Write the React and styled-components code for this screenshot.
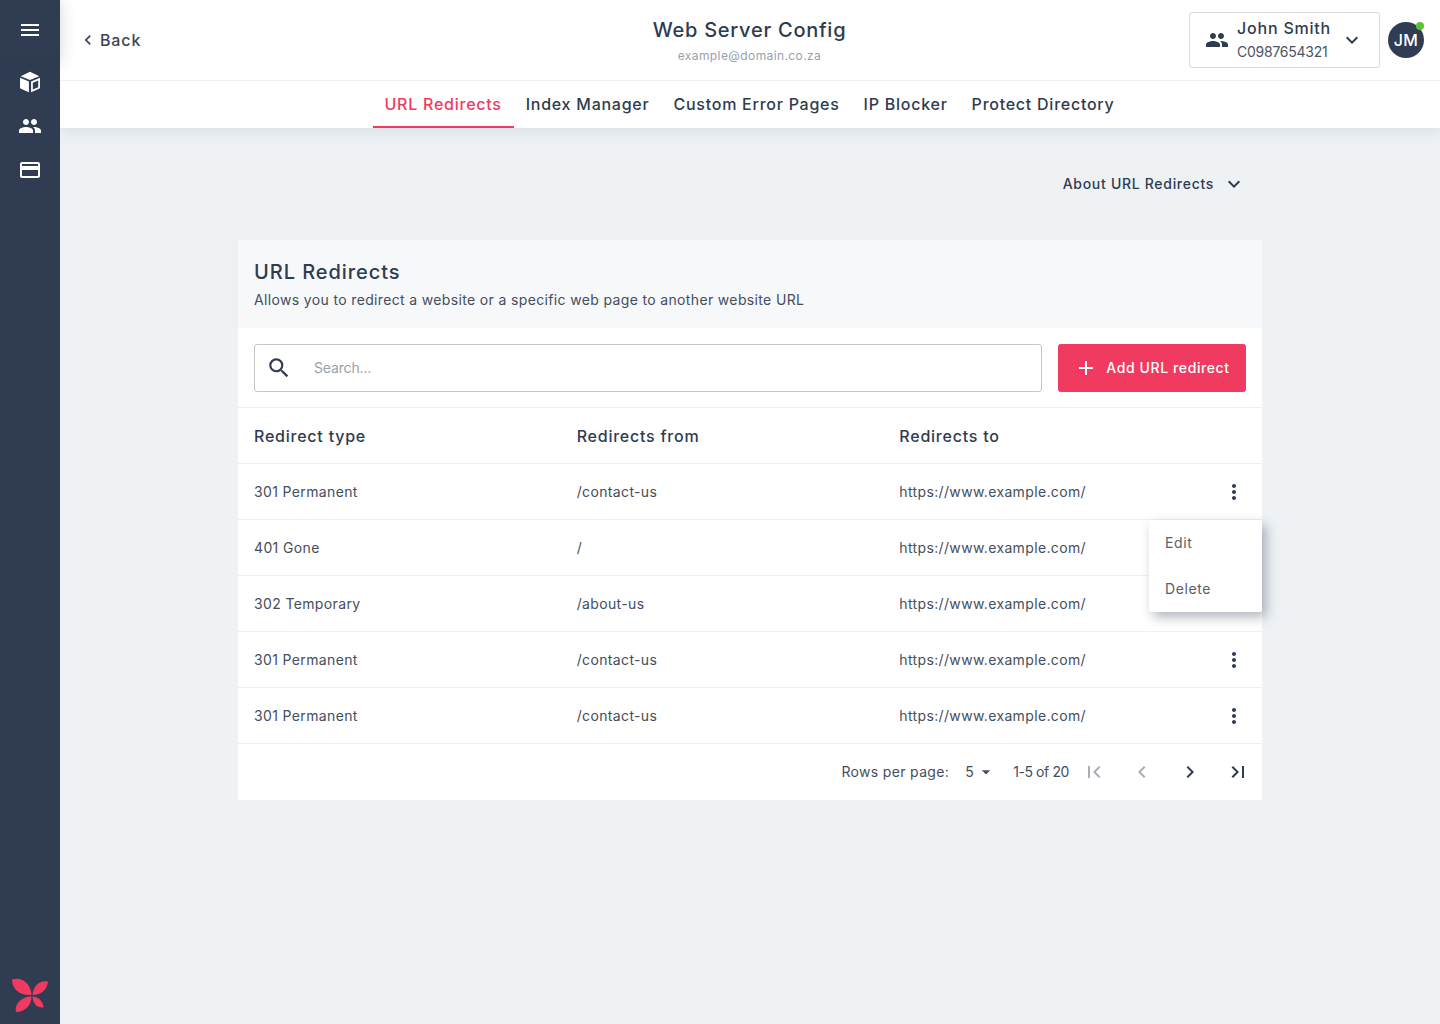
import React from "react";
import styled, { createGlobalStyle } from "styled-components";
import {
  MdMenu, MdPeople, MdCreditCard, MdKeyboardArrowDown, MdChevronLeft, MdChevronRight,
  MdSearch, MdAdd, MdMoreVert, MdFirstPage, MdLastPage, MdArrowDropDown,
} from "react-icons/md";

const Global = createGlobalStyle`
  html, body { margin: 0; padding: 0; }
  body { background: #eef2f5; font-family: "Inter", "Noto Sans", sans-serif; color: #2f3b50; }
  * { box-sizing: border-box; }
`;

const Page = styled.div`
  display: flex;
  min-height: 1024px;
  width: 1440px;
`;
const Sidebar = styled.aside`
  width: 60px;
  flex: none;
  background: #2f3c52;
  display: flex;
  flex-direction: column;
  align-items: center;
  color: #fff;
  position: relative;
  z-index: 2;
`;
const MenuBlock = styled.div`
  height: 60px;
  width: 60px;
  display: flex;
  align-items: center;
  justify-content: center;
  background: #2f3c52;
  box-shadow: 0 2px 14px rgba(47, 60, 82, 0.22);
`;
const SideBtn = styled.div`
  height: 44px;
  width: 60px;
  display: flex;
  align-items: center;
  justify-content: center;
`;
const Logo = styled.div`
  margin-top: auto;
  height: 47px;
`;
const Main = styled.div`
  flex: 1;
  min-width: 0;
  display: flex;
  flex-direction: column;
`;
const TopWrap = styled.div`
  background: #fff;
  box-shadow: 0 4px 14px rgba(47, 60, 82, 0.1);
  position: relative;
`;
const Header = styled.header`
  height: 81px;
  border-bottom: 1px solid #eef0f3;
  display: grid;
  grid-template-columns: 1fr auto 1fr;
  align-items: center;
  padding: 0 16px 1px 15px;
`;
const BackLink = styled.div`
  display: flex;
  align-items: center;
  gap: 2px;
  margin-left: 3px;
  font-size: 16px;
  font-weight: 500;
  letter-spacing: 0.85px;
  color: #3a4658;
`;
const TitleBlock = styled.div`
  text-align: center;
  padding-top: 5px;
`;
const Title = styled.div`
  font-size: 20px;
  font-weight: 500;
  line-height: 28px;
  letter-spacing: 0.74px;
  color: #2f3b50;
`;
const Sub = styled.div`
  font-size: 12px;
  line-height: 24px;
  letter-spacing: 0.4px;
  color: #9aa1ac;
`;
const HeaderRight = styled.div`
  display: flex;
  justify-content: flex-end;
  align-items: center;
  gap: 8px;
`;
const Account = styled.div`
  width: 191px;
  height: 56px;
  border: 1px solid #d5d8dc;
  border-radius: 3px;
  display: flex;
  align-items: center;
  padding: 0 15px;
  color: #2f3b50;
`;
const AccountText = styled.div`
  flex: 1;
  margin-left: 8px;
`;
const AccountName = styled.div`
  font-size: 16px;
  font-weight: 500;
  line-height: 24px;
  letter-spacing: 0.8px;
`;
const AccountId = styled.div`
  font-size: 14px;
  line-height: 24px;
  letter-spacing: -0.25px;
  color: #4b5563;
`;
const Avatar = styled.div`
  position: relative;
  width: 36px;
  height: 36px;
  border-radius: 50%;
  background: #2f3c52;
  color: #fff;
  font-size: 16px;
  font-weight: 500;
  display: flex;
  align-items: center;
  justify-content: center;
  letter-spacing: 0.4px;
`;
const Status = styled.span`
  position: absolute;
  top: 0;
  right: 0;
  width: 8px;
  height: 8px;
  border-radius: 50%;
  background: #5ec22f;
`;
const Tabs = styled.nav`
  height: 47px;
  display: flex;
  justify-content: center;
  padding-right: 1px;
`;
const Tab = styled.div`
  padding: 0 12px;
  font-size: 16px;
  font-weight: 500;
  letter-spacing: 0.75px;
  display: flex;
  align-items: center;
  color: ${(p) => (p.$active ? "#f03a5f" : "#2f3b50")};
  border-bottom: 2px solid ${(p) => (p.$active ? "#f03a5f" : "transparent")};
`;
const Content = styled.main`
  width: 1024px;
  margin: 0 auto;
  padding-top: 40px;
  position: relative;
`;
const About = styled.div`
  height: 32px;
  display: flex;
  justify-content: flex-end;
  align-items: center;
  gap: 8px;
  padding-right: 16px;
  font-size: 14px;
  font-weight: 500;
  letter-spacing: 0.7px;
  color: #2f3b50;
`;
const AboutLabel = styled.span`
  padding-bottom: 2px;
`;
const Card = styled.section`
  margin-top: 40px;
  background: #fff;
  position: relative;
`;
const CardHead = styled.div`
  height: 88px;
  background: #f6f8fa;
  padding: 18px 16px 0;
`;
const CardTitle = styled.h2`
  margin: 0;
  font-size: 20px;
  line-height: 28px;
  font-weight: 500;
  letter-spacing: 0.94px;
  color: #2f3b50;
`;
const CardDesc = styled.p`
  margin: 0;
  font-size: 14px;
  line-height: 28px;
  letter-spacing: 0.35px;
  color: #444e5e;
`;
const Toolbar = styled.div`
  height: 80px;
  display: flex;
  align-items: center;
  gap: 16px;
  padding: 0 16px;
  border-bottom: 1px solid #eef0f3;
`;
const Search = styled.div`
  flex: 1;
  height: 48px;
  border: 1px solid #c4c7cc;
  border-radius: 3px;
  display: flex;
  align-items: center;
  padding-left: 11px;
  gap: 22px;
  font-size: 14px;
  letter-spacing: -0.15px;
  color: #9a9fa9;
`;
const AddBtn = styled.button`
  width: 188px;
  height: 48px;
  border: 0;
  border-radius: 3px;
  background: #f03a5f;
  color: #fff;
  font: 500 14px "Inter", sans-serif;
  letter-spacing: 0.6px;
  display: flex;
  align-items: center;
  justify-content: center;
  gap: 8px;
`;
const Row = styled.div`
  height: 56px;
  display: grid;
  grid-template-columns: 322.67px 322.67px 1fr 40px;
  align-items: center;
  padding: 0 8px 0 16px;
  border-bottom: 1px solid #eef0f3;
  font-size: 14px;
  letter-spacing: 0.36px;
  color: #444e5e;
`;
const HeadRow = styled(Row)`
  font-size: 16px;
  font-weight: 500;
  letter-spacing: 0.77px;
  color: #2f3b50;
`;
const Kebab = styled.div`
  display: flex;
  justify-content: center;
  color: #2f3b50;
`;
const Menu = styled.div`
  position: absolute;
  top: 280px;
  right: 0;
  width: 113px;
  height: 92px;
  background: #fff;
  border-radius: 2px;
  box-shadow: 4px 5px 12px rgba(47, 60, 82, 0.38);
`;
const MenuItem = styled.div`
  height: 46px;
  padding: 0 0 2px 16px;
  display: flex;
  align-items: center;
  font-size: 14px;
  letter-spacing: 0.6px;
  color: #555e6c;
`;
const Pager = styled.div`
  height: 56px;
  display: flex;
  align-items: center;
  justify-content: flex-end;
  font-size: 14px;
  letter-spacing: 0.33px;
  color: #444e5e;
`;
const PagerText = styled.div`
  padding-bottom: 2px;
`;
const RowsSelect = styled.div`
  display: flex;
  align-items: center;
  margin-left: 16px;
  width: 32px;
  letter-spacing: 2px;
`;
const Range = styled(PagerText)`
  margin-left: 16px;
  margin-right: 1px;
  letter-spacing: -0.4px;
`;
const PageBtn = styled.div`
  width: 48px;
  height: 48px;
  display: flex;
  align-items: center;
  justify-content: center;
  color: ${(p) => (p.$off ? "#a9adb5" : "#2f3b50")};
`;

const Cube = () => (
  <svg width="26" height="26" viewBox="0 0 24 24" fill="#fff">
    <path d="M12 2.600 20.600 6.600 12 10.200 3.400 6.600Z" />
    <path d="M2.800 8 11 11.500V21.400L3.600 18.200C3.100 18 2.800 17.500 2.800 17Z" />
    <path fillRule="evenodd" d="M21.200 8V17C21.200 17.500 20.900 18 20.400 18.200L13 21.400V11.500ZM19.600 10.500 14.600 12.600V19L19.600 16.800Z" />
  </svg>
);

const Butterfly = () => (
  <svg width="38" height="36" viewBox="0 0 38 36" fill="#f03a5f">
    <path d="M1 2.500C10 -0.500 20 6 20.500 18 10 19 1 13 1 2.500Z" />
    <path d="M37 4.500C29 3 22.500 8 21.500 18 30 18 36 13 37 4.500Z" />
    <path d="M5 35C3 27 11 19.500 20.500 19.500 20.500 28 14 35 5 35Z" />
    <path d="M21.500 19.500C27 19.500 32 24 32.500 30.500 26 31 22 27 21.500 19.500Z" />
  </svg>
);

const rows = [
  ["301 Permanent", "/contact-us", true],
  ["401 Gone", "/", false],
  ["302 Temporary", "/about-us", false],
  ["301 Permanent", "/contact-us", true],
  ["301 Permanent", "/contact-us", true],
];

const tabs = ["URL Redirects", "Index Manager", "Custom Error Pages", "IP Blocker", "Protect Directory"];

export default function App() {
  return (
    <Page>
      <Global />
      <Sidebar>
        <MenuBlock><MdMenu size={24} /></MenuBlock>
        <SideBtn><Cube /></SideBtn>
        <SideBtn><MdPeople size={24} /></SideBtn>
        <SideBtn><MdCreditCard size={24} /></SideBtn>
        <Logo><Butterfly /></Logo>
      </Sidebar>
      <Main>
        <TopWrap>
          <Header>
            <BackLink><MdChevronLeft size={20} />Back</BackLink>
            <TitleBlock>
              <Title>Web Server Config</Title>
              <Sub>example@domain.co.za</Sub>
            </TitleBlock>
            <HeaderRight>
              <Account>
                <MdPeople size={24} />
                <AccountText>
                  <AccountName>John Smith</AccountName>
                  <AccountId>C0987654321</AccountId>
                </AccountText>
                <MdKeyboardArrowDown size={24} />
              </Account>
              <Avatar>JM<Status /></Avatar>
            </HeaderRight>
          </Header>
          <Tabs>
            {tabs.map((t, i) => <Tab key={t} $active={i === 0}>{t}</Tab>)}
          </Tabs>
        </TopWrap>
        <Content>
          <About><AboutLabel>About URL Redirects</AboutLabel><MdKeyboardArrowDown size={24} /></About>
          <Card>
            <CardHead>
              <CardTitle>URL Redirects</CardTitle>
              <CardDesc>Allows you to redirect a website or a specific web page to another website URL</CardDesc>
            </CardHead>
            <Toolbar>
              <Search><MdSearch size={26} color="#2f3b50" />Search...</Search>
              <AddBtn><MdAdd size={24} />Add URL redirect</AddBtn>
            </Toolbar>
            <HeadRow>
              <div>Redirect type</div>
              <div>Redirects from</div>
              <div>Redirects to</div>
            </HeadRow>
            {rows.map((r, i) => (
              <Row key={i}>
                <div>{r[0]}</div>
                <div>{r[1]}</div>
                <div>https://www.example.com/</div>
                <Kebab>{r[2] && <MdMoreVert size={24} />}</Kebab>
              </Row>
            ))}
            <Pager>
              <PagerText>Rows per page:</PagerText>
              <RowsSelect>
                <PagerText>5</PagerText>
                <MdArrowDropDown size={20} />
              </RowsSelect>
              <Range>1-5 of 20</Range>
              <PageBtn $off><MdFirstPage size={24} /></PageBtn>
              <PageBtn $off><MdChevronLeft size={24} /></PageBtn>
              <PageBtn><MdChevronRight size={24} /></PageBtn>
              <PageBtn><MdLastPage size={24} /></PageBtn>
            </Pager>
            <Menu>
              <MenuItem>Edit</MenuItem>
              <MenuItem>Delete</MenuItem>
            </Menu>
          </Card>
        </Content>
      </Main>
    </Page>
  );
}
